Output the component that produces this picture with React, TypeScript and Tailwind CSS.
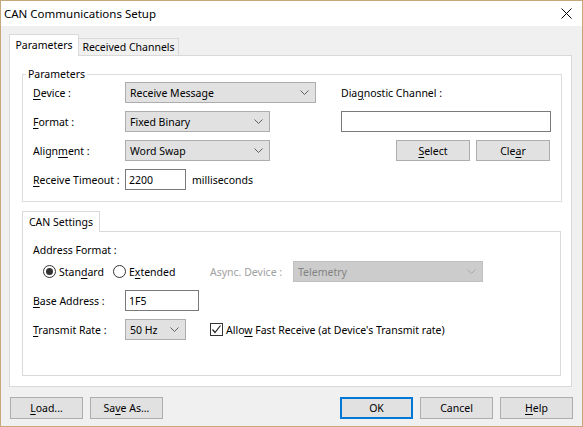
import React from 'react';

function Chevron({ color = '#606060' }: { color?: string }) {
    return (
        <svg width="9" height="5" viewBox="0 0 9 5" className="shrink-0">
            <polyline points="0.5,0.5 4.5,4.5 8.5,0.5" fill="none" stroke={color} strokeWidth="1" />
        </svg>
    );
}

// mnemonic underline
function U({ children }: { children: React.ReactNode }) {
    return <span className="underline underline-offset-[2px]">{children}</span>;
}

function Combo({ value, className = '', disabled = false }: { value: string; className?: string; disabled?: boolean }) {
    return (
        <div
            className={`flex items-center justify-between h-[21px] border pl-[4px] pr-[6px] ${
                disabled ? 'bg-[#cccccc] border-[#bfbfbf] text-[#838383]' : 'bg-[#e1e1e1] border-[#adadad]'
            } ${className}`}
        >
            <span>{value}</span>
            <Chevron color={disabled ? '#a8a8a8' : '#606060'} />
        </div>
    );
}

function TextBox({ value = '', className = '' }: { value?: string; className?: string }) {
    return (
        <div className={`flex items-center h-[21px] bg-white border border-[#7a7a7a] pl-[3px] ${className}`}>{value}</div>
    );
}

function Button({ children, primary = false, className = '' }: { children: React.ReactNode; primary?: boolean; className?: string }) {
    return (
        <div
            className={`flex items-center justify-center bg-[#e1e1e1] ${
                primary ? 'border-2 border-[#0078d7]' : 'border border-[#adadad]'
            } ${className}`}
        >
            {children}
        </div>
    );
}

export default function App() {
    return (
        <div className="w-[583px] h-[427px] border border-[#c8a77c] bg-[#f0f0f0] flex flex-col text-[10.5px] leading-[14px] text-black font-['Segoe_UI','Noto_Sans',sans-serif] overflow-hidden whitespace-nowrap">
            {/* Title bar */}
            <div className="h-[25px] bg-white flex items-center justify-between pl-[3px] pr-[10px] shrink-0 text-[11.5px]">
                <span>CAN Communications Setup</span>
                <svg width="11" height="11" viewBox="0 0 11 11">
                    <path d="M0.5 0.5 L10.5 10.5 M10.5 0.5 L0.5 10.5" stroke="#000" strokeWidth="1" />
                </svg>
            </div>

            {/* Tabs */}
            <div className="flex items-end ml-[8px] mt-[8px] h-[21px]">
                <div className="relative z-10 -mb-px h-[22px] w-[70px] bg-white border border-b-0 border-[#d9d9d9] flex items-start justify-center pt-[3px]">
                    Parameters
                </div>
                <div className="h-[17px] w-[100px] border border-b-0 border-l-0 border-[#d9d9d9] flex items-center justify-center">
                    Received Channels
                </div>
            </div>

            <div className="ml-[8px] w-[563px] h-[332px] bg-white border border-[#d9d9d9] flex flex-col">
                {/* Parameters group */}
                <fieldset className="ml-[12px] mt-[11px] w-[540px] border border-[#dcdcdc] pt-px pb-[11px]">
                    <legend className="ml-[3px] px-[2px]">Parameters</legend>
                    <div className="flex pl-[10px]">
                        <div className="w-[308px] flex flex-col gap-[8px]">
                            <div className="flex items-center h-[21px]">
                                <span className="w-[92px]"><U>D</U>evice :</span>
                                <Combo value="Receive Message" className="w-[191px]" />
                            </div>
                            <div className="flex items-center h-[21px]">
                                <span className="w-[92px]"><U>F</U>ormat :</span>
                                <Combo value="Fixed Binary" className="w-[145px]" />
                            </div>
                            <div className="flex items-center h-[21px]">
                                <span className="w-[92px]">Align<U>m</U>ent :</span>
                                <Combo value="Word Swap" className="w-[145px]" />
                            </div>
                            <div className="flex items-center h-[21px]">
                                <span className="w-[92px]"><U>R</U>eceive Timeout :</span>
                                <TextBox value="2200" className="w-[61px]" />
                                <span className="ml-[6px]">milliseconds</span>
                            </div>
                        </div>
                        <div className="flex flex-col gap-[8px]">
                            <div className="flex items-center h-[21px]">Dia<U>g</U>nostic Channel :</div>
                            <TextBox className="w-[210px]" />
                            <div className="flex gap-[6px] ml-[55px] h-[21px]">
                                <Button className="w-[74px] h-[21px]"><U>S</U>elect</Button>
                                <Button className="w-[74px] h-[21px]">Cle<U>a</U>r</Button>
                            </div>
                        </div>
                    </div>
                </fieldset>

                {/* CAN Settings */}
                <div className="ml-[12px] mt-[9px] flex flex-col">
                    <div className="relative z-10 -mb-px h-[21px] w-[78px] bg-white border border-b-0 border-[#d9d9d9] flex items-center justify-center">
                        CAN Settings
                    </div>
                    <div className="w-[539px] h-[145px] border border-[#d9d9d9] bg-white pl-[10px] pt-[11px] flex flex-col">
                        <div className="h-[16px]">Address Format :</div>
                        <div className="flex items-center h-[21px] mt-[2px]">
                            <div className="flex items-center ml-[10px] w-[70px]">
                                <span className="w-[13px] h-[13px] rounded-full border border-[#333] flex items-center justify-center">
                                    <span className="w-[7px] h-[7px] rounded-full bg-[#333]" />
                                </span>
                                <span className="ml-[3px]">Stan<U>d</U>ard</span>
                            </div>
                            <div className="flex items-center w-[97px]">
                                <span className="w-[13px] h-[13px] rounded-full border border-[#333]" />
                                <span className="ml-[3px]">E<U>x</U>tended</span>
                            </div>
                            <span className="w-[83px] text-[#a0a0a0]">Async. Device :</span>
                            <Combo value="Telemetry" disabled className="w-[190px]" />
                        </div>
                        <div className="flex items-center h-[21px] mt-[8px]">
                            <span className="w-[92px]"><U>B</U>ase Address :</span>
                            <TextBox value="1F5" className="w-[74px]" />
                        </div>
                        <div className="flex items-center h-[21px] mt-[8px]">
                            <span className="w-[92px]"><U>T</U>ransmit Rate :</span>
                            <Combo value="50 Hz" className="w-[61px]" />
                            <span className="ml-[24px] w-[13px] h-[13px] border border-[#333] flex items-center justify-center">
                                <svg width="11" height="11" viewBox="0 0 11 11">
                                    <polyline points="1.5,5.5 4,8.5 9.5,1.5" fill="none" stroke="#222" strokeWidth="1.2" />
                                </svg>
                            </span>
                            <span className="ml-[3px]">Allo<U>w</U> Fast Receive (at Device's Transmit rate)</span>
                        </div>
                    </div>
                </div>
            </div>

            {/* Bottom buttons */}
            <div className="flex items-center ml-[9px] mt-[10px] h-[22px]">
                <Button className="w-[73px] h-[22px]"><U>L</U>oad...</Button>
                <Button className="w-[73px] h-[22px] ml-[7px]">Sa<U>v</U>e As...</Button>
                <Button primary className="w-[73px] h-[22px] ml-[177px]">OK</Button>
                <Button className="w-[73px] h-[22px] ml-[7px]">Cancel</Button>
                <Button className="w-[73px] h-[22px] ml-[7px]"><U>H</U>elp</Button>
            </div>
        </div>
    );
}
